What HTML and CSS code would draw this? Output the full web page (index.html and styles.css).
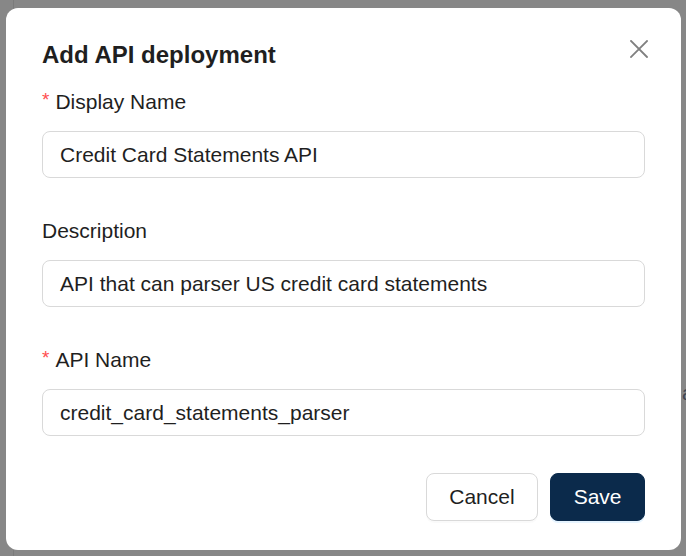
FILE: index.html
```html
<!DOCTYPE html>
<html lang="en">
<head>
<meta charset="utf-8">
<title>Add API deployment</title>
<link rel="stylesheet" href="styles.css">
</head>
<body>
<div class="page-bg">
  <span class="bg-text">a</span>
</div>
<div class="modal">
  <button class="close" aria-label="Close">
    <svg width="18" height="18" viewBox="0 0 18 18"><path d="M1 1L17 17M17 1L1 17" stroke="#808080" stroke-width="1.8" fill="none" stroke-linecap="square"/></svg>
  </button>
  <h1 class="title">Add API deployment</h1>
  <div class="field">
    <label class="label"><span class="req">*</span>Display Name</label>
    <div class="input">Credit Card Statements API</div>
  </div>
  <div class="field">
    <label class="label">Description</label>
    <div class="input">API that can parser US credit card statements</div>
  </div>
  <div class="field">
    <label class="label"><span class="req">*</span>API Name</label>
    <div class="input">credit_card_statements_parser</div>
  </div>
  <div class="footer">
    <button class="btn btn-default">Cancel</button>
    <button class="btn btn-primary">Save</button>
  </div>
</div>
</body>
</html>
```
FILE: styles.css
```css
* { box-sizing: border-box; }
html, body { margin: 0; padding: 0; }
body {
  width: 686px;
  height: 556px;
  overflow: hidden;
  background: #878787;
  font-family: "Liberation Sans", Arial, sans-serif;
  color: #1f1f1f;
  position: relative;
}
.page-bg {
  position: absolute;
  inset: 0;
  border-left: 1px solid #7b7b7b;
  left: 13px;
}
.bg-text {
  position: absolute;
  left: 668px;
  top: 382px;
  font-size: 20px;
  color: #3f4552;
}
.modal {
  position: relative;
  margin: 8px 0 0 6px;
  width: 675px;
  height: 542px;
  background: #fff;
  border-radius: 12px;
  padding: 31px 36px 29px 36px;
  display: flex;
  flex-direction: column;
}
.close {
  position: absolute;
  top: 32px;
  left: 624px;
  width: 18px;
  height: 18px;
  padding: 0;
  border: 0;
  background: none;
  display: flex;
}
.title {
  margin: 0 0 16px;
  font-size: 24px;
  line-height: 32px;
  font-weight: 700;
  color: #1f1f1f;
}
.field { display: flex; flex-direction: column; margin-bottom: 38px; }
.field:nth-of-type(3) { margin-bottom: 0; }
.label {
  font-size: 21px;
  line-height: 30px;
  margin-bottom: 14px;
  color: #1f1f1f;
  display: flex;
  align-items: center;
}
.req {
  color: #ff4d4f;
  font-size: 19px;
  margin-right: 6px;
  position: relative;
  top: -2px;
}
.input {
  height: 47px;
  border: 1px solid #d9d9d9;
  border-radius: 8px;
  padding: 0 17px;
  font-size: 21px;
  display: flex;
  align-items: center;
  color: #1f1f1f;
}
.footer {
  margin-top: 37px;
  display: flex;
  justify-content: flex-end;
  gap: 12px;
}
.btn {
  height: 48px;
  padding: 0 22.5px;
  border-radius: 8px;
  font-family: "Liberation Sans", Arial, sans-serif;
  font-size: 21px;
  border: 1px solid #d9d9d9;
  background: #fff;
  color: #1f1f1f;
  box-shadow: 0 2px 0 rgba(0,0,0,0.02);
}
.btn-primary {
  background: #0b2a4b;
  border-color: #0b2a4b;
  color: #fff;
  box-shadow: 0 2px 0 rgba(5,145,255,0.1);
}
```
